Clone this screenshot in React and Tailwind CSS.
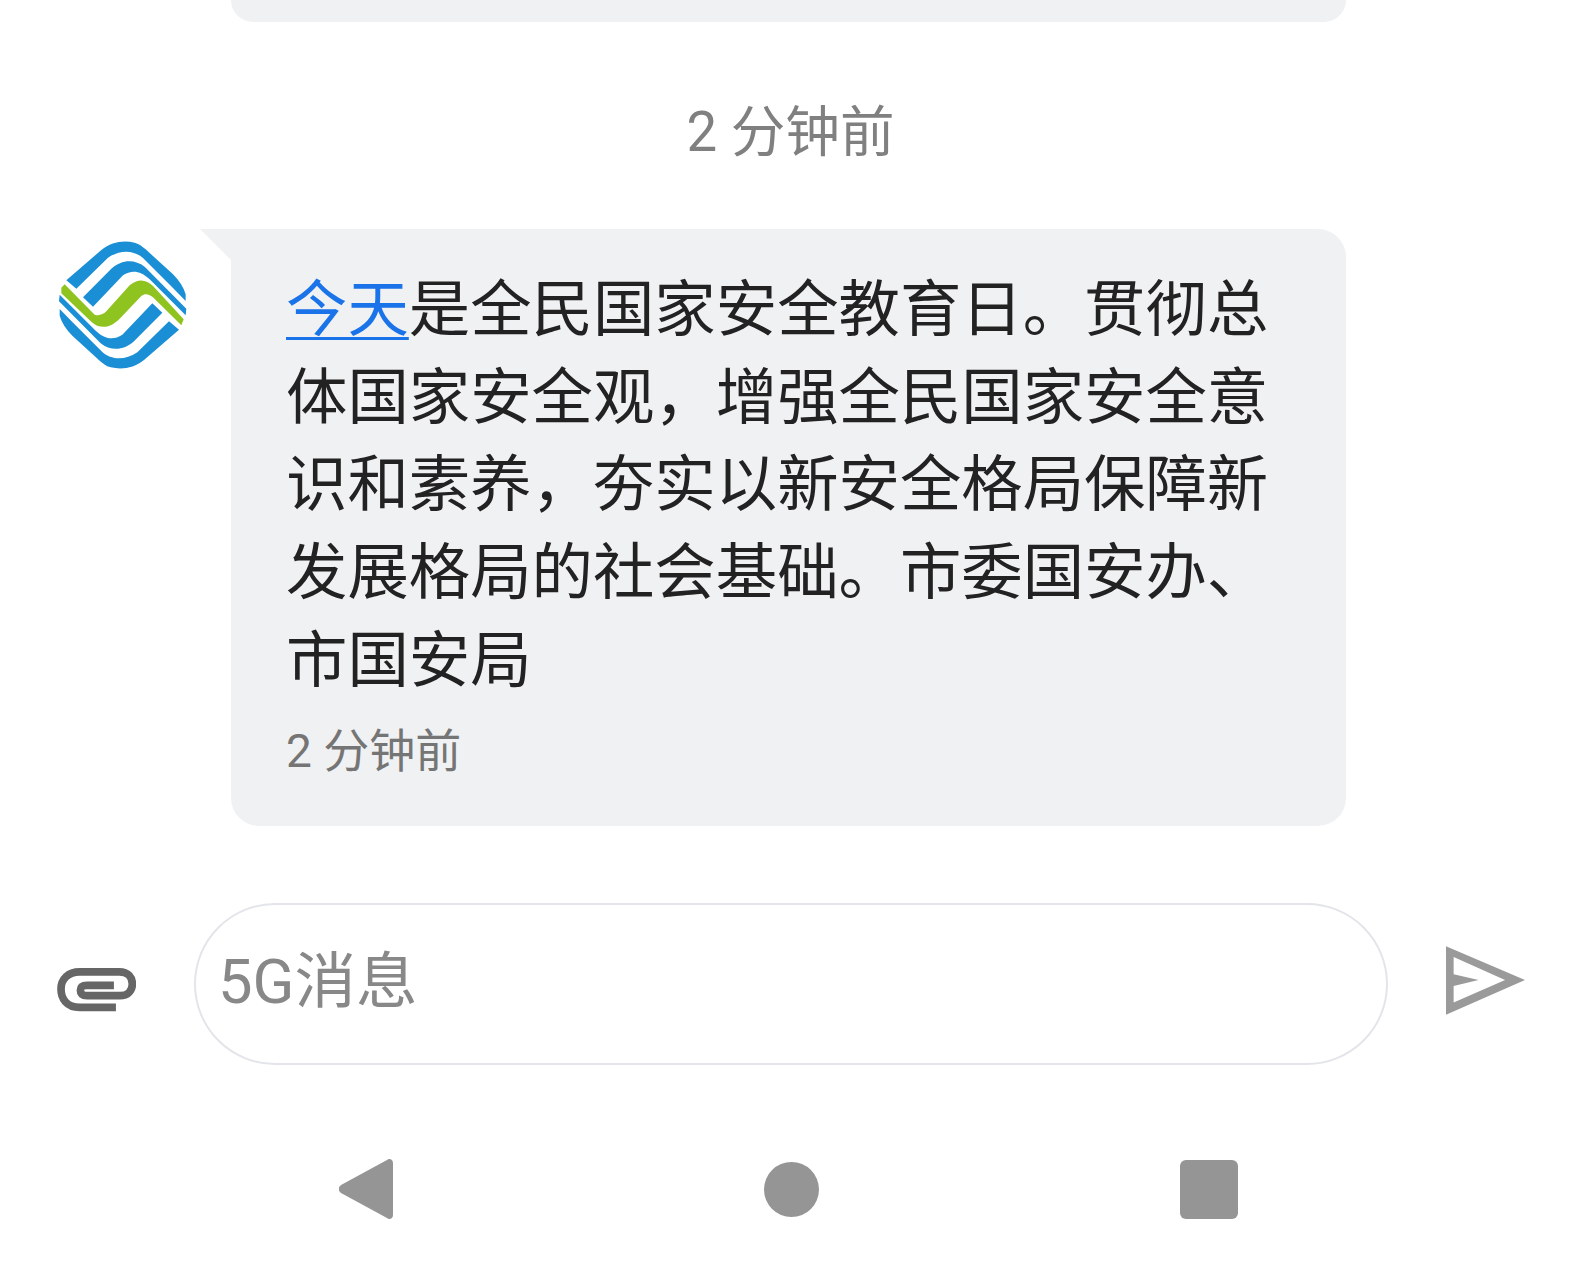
import React from "react";

const font = { fontFamily: '"Roboto", "Noto Sans CJK SC", sans-serif' };

function Logo() {
  const band1 = "M80 213 L185 122 C215 98 250 92 285 100 C300 104 308 112 318 120 L400 195 C420 215 432 235 438 255 L438 275 L400 236 L310 146 C285 124 245 118 205 145 L110 238 Z";
  const band2 = "M130 264 L215 178 C245 150 285 148 315 172 L440 298 L438 318 L330 210 C300 182 275 182 250 198 L160 292 Z";
  const green = "M65 235 L75 225 L165 316 C178 320 190 316 200 306 L270 228 C295 206 320 210 340 230 L432 330 L425 348 L340 264 C325 252 315 252 305 260 L240 328 C210 358 180 360 155 337 L65 252 Z";
  return (
    <svg viewBox="55 92 390 390" className="w-[130px] h-[130px] shrink-0 mt-[11px]">
      <path d={band1} fill="#1a8fd6" />
      <path d={band2} fill="#1a8fd6" />
      <g transform="rotate(180 249 287)">
        <path d={band1} fill="#1a8fd6" />
        <path d={band2} fill="#1a8fd6" />
      </g>
      <path d={green} fill="#8fc31f" />
    </svg>
  );
}

function Clip() {
  return (
    <svg viewBox="82 265 236 130" className="w-[79px] h-[44px] shrink-0 mt-[12px]">
      <path
        d="M258 382 H150 C110 382 94 355 94 327 C94 298 115 276 150 276 H268 C295 276 307 292 307 312 C307 333 293 347 270 347 H172 C158 347 152 341 152 331 C152 321 158 316 172 316 H252"
        fill="none"
        stroke="#666666"
        strokeWidth="23"
      />
    </svg>
  );
}

function Send() {
  return (
    <svg viewBox="437 195 238 207" className="w-[79px] h-[69px] shrink-0">
      <path
        fillRule="evenodd"
        d="M437 195 L675 297 L437 402 Z M460 228 V280 L535 297 L460 315 V365 L615 297 Z"
        fill="#9a9a9a"
      />
    </svg>
  );
}

export default function App() {
  return (
    <div className="w-[1581px] h-[1280px] overflow-hidden bg-white flex flex-col" style={font}>
      <div className="h-[22px] w-[1115px] ml-[231px] bg-[#f0f1f3] rounded-b-[28px] shrink-0"></div>

      <div className="h-[207px] shrink-0 pt-[78px] text-center text-[#808080] text-[54.6px] leading-[64px]">
        2 分钟前
      </div>

      <div className="flex items-start pl-[58px] shrink-0">
        <Logo />
        <div className="relative ml-[43px] w-[1115px] h-[597px] bg-[#f0f1f3] rounded-[28px] rounded-tl-none pl-[55px] pt-[38px]">
          <svg viewBox="0 0 31 31" className="absolute left-[-31px] top-0 w-[31px] h-[31px]">
            <path d="M0 0 H31 V31 Z" fill="#f0f1f3" />
          </svg>
          <p className="text-[61.4px] leading-[87.7px] text-[#222222] whitespace-nowrap">
            <span className="text-[#1a73e8] underline decoration-[3px] underline-offset-[6px]">今天</span>
            是全民国家安全教育日。贯彻总
            <br />
            体国家安全观，增强全民国家安全意
            <br />
            识和素养，夯实以新安全格局保障新
            <br />
            发展格局的社会基础。市委国安办、
            <br />
            市国安局
          </p>
          <div className="mt-[16px] text-[46px] leading-[58px] text-[#757575]">2 分钟前</div>
        </div>
      </div>

      <div className="flex items-center pl-[57px] mt-[77px] shrink-0">
        <Clip />
        <div className="ml-[58px] w-[1194px] h-[162px] border-2 border-[#e3e5ea] rounded-full flex items-center pl-[22px] pb-[4px] text-[61.5px] text-[#888888]">
          5G消息
        </div>
        <div className="ml-[58px] mb-[8px]">
          <Send />
        </div>
      </div>

      <div className="flex items-center mt-[92px] shrink-0">
        <svg viewBox="0 0 54 64" className="ml-[339px] w-[54px] h-[64px]">
          <path
            d="M48 3 C50 1 54 2 54 6 V58 C54 62 50 63 48 61 L2 36 C-1 34 -1 30 2 28 Z"
            fill="#959595"
          />
        </svg>
        <div className="ml-[371px] w-[55px] h-[55px] rounded-full bg-[#959595]"></div>
        <div className="ml-[361px] w-[58px] h-[59px] rounded-md bg-[#959595]"></div>
      </div>
    </div>
  );
}
